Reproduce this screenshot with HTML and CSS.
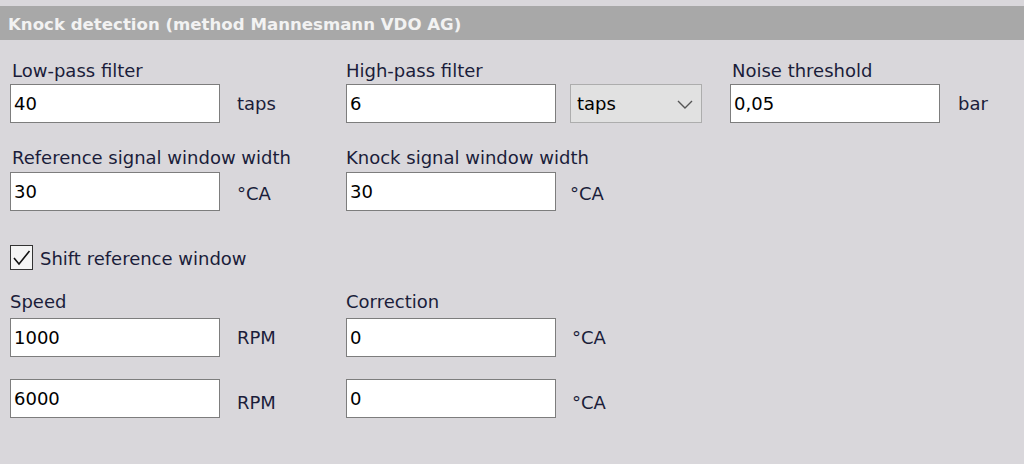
FILE: index.html
```html
<!DOCTYPE html>
<html>
<head>
<meta charset="utf-8">
<link rel="stylesheet" href="styles.css">
</head>
<body>
<div class="panel">
  <div class="header">Knock detection (method Mannesmann VDO AG)</div>
  <div class="content">
    <div class="row row-1">
      <div class="field col-1">
        <div class="label">Low-pass filter</div>
        <div class="ctl"><div class="input">40</div><span class="unit">taps</span></div>
      </div>
      <div class="field col-2">
        <div class="label label-flush">High-pass filter</div>
        <div class="ctl"><div class="input">6</div>
          <div class="select"><span>taps</span>
            <svg class="chev" width="16" height="9" viewBox="0 0 16 9"><path d="M1 1 L8 8 L15 1" fill="none" stroke="#555" stroke-width="1.4"/></svg>
          </div>
        </div>
      </div>
      <div class="field col-3">
        <div class="label">Noise threshold</div>
        <div class="ctl"><div class="input">0,05</div><span class="unit unit-wide">bar</span></div>
      </div>
    </div>
    <div class="row row-2">
      <div class="field col-1">
        <div class="label">Reference signal window width</div>
        <div class="ctl"><div class="input">30</div><span class="unit unit-low">°CA</span></div>
      </div>
      <div class="field col-2">
        <div class="label label-flush">Knock signal window width</div>
        <div class="ctl"><div class="input">30</div><span class="unit unit-near unit-low">°CA</span></div>
      </div>
    </div>
    <div class="check-row">
      <div class="checkbox"><svg width="21" height="22" viewBox="0 0 21 22"><path d="M3 11 L8 17 L18.5 4" fill="none" stroke="#111" stroke-width="1.6"/></svg></div>
      <span class="check-label">Shift reference window</span>
    </div>
    <div class="row row-3">
      <div class="field col-1">
        <div class="label label-flush">Speed</div>
        <div class="ctl"><div class="input">1000</div><span class="unit">RPM</span></div>
      </div>
      <div class="field col-2">
        <div class="label label-flush">Correction</div>
        <div class="ctl"><div class="input">0</div><span class="unit unit-near2">°CA</span></div>
      </div>
    </div>
    <div class="row row-4">
      <div class="field col-1">
        <div class="ctl"><div class="input">6000</div><span class="unit unit-lower">RPM</span></div>
      </div>
      <div class="field col-2">
        <div class="ctl"><div class="input">0</div><span class="unit unit-near2 unit-lower">°CA</span></div>
      </div>
    </div>
  </div>
</div>
</body>
</html>
```

FILE: styles.css
```css
html, body {
  margin: 0;
  padding: 0;
  background: #d9d7db;
}
body {
  width: 1024px;
  height: 464px;
  overflow: hidden;
  font-family: "DejaVu Sans", "Liberation Sans", sans-serif;
  font-size: 18px;
  color: #1b1d3a;
}
.panel {
  padding-top: 6px;
}
.header {
  background: #a8a8a8;
  color: #f2f2f2;
  font-weight: bold;
  font-size: 16.6px;
  height: 34px;
  box-sizing: border-box;
  padding: 4px 0 0 8px;
  line-height: 30px;
  white-space: nowrap;
}
.content {
  padding: 21px 0 0 10px;
}
.row {
  display: flex;
}
.row-2 { margin-top: 25px; }
.row-3 { margin-top: 23px; }
.row-4 { margin-top: 22px; }
.field {
  display: flex;
  flex-direction: column;
}
.col-1 { width: 336px; }
.col-2 { width: 384px; }
.col-3 { flex: 1; }
.label {
  line-height: 20px;
  height: 20px;
  padding-left: 2px;
  margin-bottom: 3px;
  white-space: nowrap;
}
.row-2 .label { margin-bottom: 4px; }
.row-3 .label { margin-bottom: 6px; }
.label-flush { padding-left: 0; }
.ctl {
  display: flex;
  align-items: flex-start;
}
.input {
  width: 210px;
  height: 39px;
  box-sizing: border-box;
  background: #fff;
  border: 1px solid #7d7d7d;
  color: #000;
  line-height: 37px;
  padding-left: 3px;
}
.unit {
  line-height: 39px;
  margin-left: 17px;
}
.unit-wide { margin-left: 18px; }
.unit-near { margin-left: 14px; }
.unit-near2 { margin-left: 16px; }
.unit-low { padding-top: 2px; }
.unit-lower { padding-top: 4px; }
.select {
  width: 132px;
  height: 39px;
  box-sizing: border-box;
  margin-left: 14px;
  background: #e1e1e1;
  border: 1px solid #adadad;
  display: flex;
  align-items: center;
  justify-content: space-between;
  padding: 0 8px 0 6px;
  color: #000;
  line-height: 37px;
}
.chev {
  display: block;
  margin-top: 2px;
}
.check-row {
  display: flex;
  align-items: flex-start;
  margin-top: 32px;
  height: 24px;
}
.checkbox {
  width: 23px;
  height: 25px;
  box-sizing: border-box;
  border: 1px solid #333;
  background: #f4f4f4;
  display: flex;
  align-items: center;
  justify-content: center;
}
.checkbox svg { display: block; }
.check-label {
  margin-left: 7px;
  line-height: 24px;
  padding-top: 2px;
}
```
